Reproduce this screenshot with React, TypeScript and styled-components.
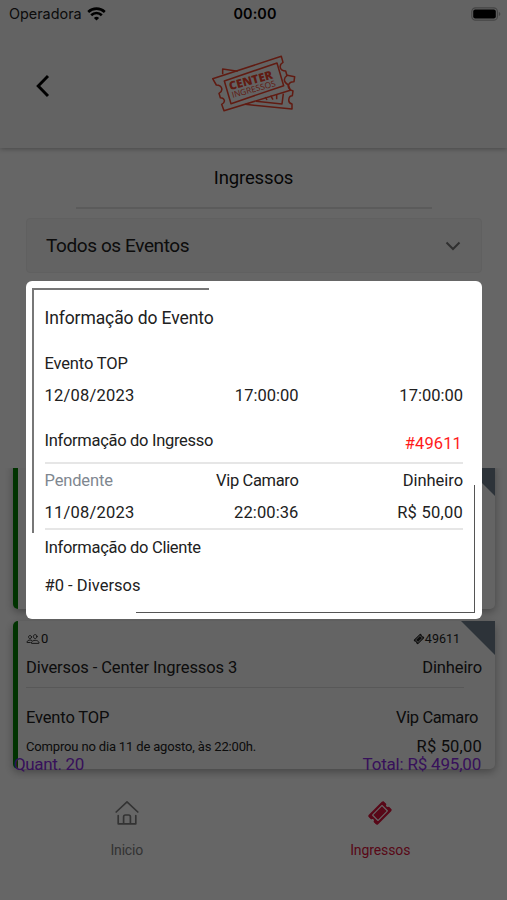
import React from "react";
import styled, { createGlobalStyle } from "styled-components";
import { FaTicketAlt } from "react-icons/fa";
import { IoPeopleOutline } from "react-icons/io5";

const GlobalStyle = createGlobalStyle`
  * { box-sizing: border-box; }
  body { margin: 0; background: #fff; font-family: Roboto, "Open Sans", sans-serif; color: #212121; }
`;

const Screen = styled.div`
  position: relative;
  display: flex;
  flex-direction: column;
  width: 507px;
  height: 900px;
  overflow: hidden;
  background: #fff;
`;

const Text = styled.span<{ $size?: number; $ls?: number; $color?: string }>`
  font-size: ${(p) => p.$size ?? 16.5}px;
  letter-spacing: ${(p) => p.$ls ?? 0}px;
  color: ${(p) => p.$color ?? "inherit"};
  line-height: 16px;
  white-space: nowrap;
`;

const Header = styled.header`
  flex: none;
  height: 148px;
  background: #f8f8f8;
  box-shadow: 0 1px 5px rgba(0, 0, 0, 0.3);
`;

const StatusBar = styled.div`
  display: grid;
  grid-template-columns: 1fr auto 1fr;
  align-items: center;
  height: 27px;
  padding: 0 6px 0 9px;
  font-family: Inter, sans-serif;
`;

const Carrier = styled.div`
  display: flex;
  align-items: center;
  gap: 5px;
  font-size: 14.4px;
`;

const Clock = styled.div`
  font-size: 14.4px;
  font-weight: 600;
  letter-spacing: 0.1px;
  color: #000;
`;

const BatteryIcon = styled.svg`
  justify-self: end;
`;

const NavBar = styled.div`
  display: grid;
  grid-template-columns: 1fr auto 1fr;
  align-items: center;
  height: 118px;
  padding: 0 34px 0 35px;
`;

const LogoArt = styled.svg`
  margin-bottom: 4px;
`;

const Title = styled.div`
  display: flex;
  justify-content: center;
  align-items: center;
  height: 59px;
  color: #111;
`;

const TitleRule = styled.hr`
  width: 356px;
  height: 2px;
  margin: 0 auto;
  border: 0;
  background: #e4e4e4;
`;

const Select = styled.div`
  display: flex;
  justify-content: space-between;
  align-items: center;
  flex: none;
  height: 55px;
  margin: 9px 25px 0 26px;
  padding: 1px 20px 0 19px;
  background: #f7f7f7;
  border: 1px solid #efefef;
  border-radius: 4px;
`;

const TicketList = styled.main`
  display: flex;
  flex-direction: column;
  gap: 12px;
  flex: none;
  height: 311px;
  margin-top: 195px;
  padding: 0 12px 0 13px;
  overflow: hidden;
`;

const TicketCard = styled.article<{ $scrolled?: boolean }>`
  flex: none;
  position: relative;
  height: ${(p) => (p.$scrolled ? 147 : 148)}px;
  margin-top: ${(p) => (p.$scrolled ? -6 : 0)}px;
  padding: 8px 13px 0 8px;
  background: #fafafa;
  border-left: 5px solid #008000;
  border-radius: 5px;
  box-shadow: 0 3px 9px rgba(0, 0, 0, 0.32);
`;

const Corner = styled.div`
  position: absolute;
  top: 0;
  right: 0;
  width: 34px;
  height: 34px;
  background: #708090;
  clip-path: polygon(0 0, 100% 0, 100% 100%);
`;

const CardRow = styled.div<{ $h: number; $right?: number }>`
  display: flex;
  justify-content: space-between;
  align-items: center;
  height: ${(p) => p.$h}px;
  padding-right: ${(p) => p.$right ?? 0}px;
`;

const Badge = styled.span`
  display: flex;
  align-items: center;
  gap: 1px;
`;

const TicketGlyph = styled(FaTicketAlt)`
  transform: rotate(-45deg) scaleY(0.9);
`;

const CardRule = styled.hr`
  height: 1px;
  margin: 1px 18px 13px 0;
  border: 0;
  background: #dcdcdc;
`;

const Totals = styled.div`
  position: relative;
  display: flex;
  flex: none;
  justify-content: space-between;
  align-items: center;
  height: 24px;
  margin-top: -27px;
  padding: 0 26px 0 14px;
  color: #8a2be2;
`;

const TabBar = styled.nav`
  display: grid;
  grid-template-columns: 1fr 1fr;
  flex: 1;
  margin-top: 3px;
  background: #fff;
`;

const Tab = styled.div<{ $active?: boolean }>`
  display: flex;
  flex-direction: column;
  align-items: center;
  gap: 16px;
  padding-top: 21px;
  color: ${(p) => (p.$active ? "#dc143c" : "#808080")};
`;

const TabIcon = styled.div`
  display: flex;
  align-items: center;
  justify-content: center;
  width: 26px;
  height: 26px;
`;

const Overlay = styled.div`
  position: absolute;
  inset: 0;
  padding: 281px 25px 0 26px;
  background: rgba(0, 0, 0, 0.6);
`;

const Modal = styled.section`
  position: relative;
  height: 338px;
  padding: 19px 19px 0 18.5px;
  background: #fff;
  border-radius: 6px;
`;

const FrameTop = styled.i`
  position: absolute;
  top: 7px;
  left: 6px;
  width: 177px;
  height: 245px;
  border-left: 2px solid #777;
  &::before { content: ""; display: block; height: 2px; background: #777; }
`;

const FrameBottom = styled.i`
  position: absolute;
  right: 7px;
  bottom: 6px;
  display: flex;
  align-items: flex-end;
  width: 339px;
  height: 128px;
  border-right: 1px solid #555;
  &::after { content: ""; flex: 1; height: 1px; background: #555; }
`;

const InfoRow = styled.div<{ $h?: number; $mt?: number }>`
  display: grid;
  grid-template-columns: 152px 102px 1fr;
  align-items: center;
  height: ${(p) => p.$h ?? 32}px;
  margin-top: ${(p) => p.$mt ?? 0}px;
  > :not(:first-child) { justify-self: end; }
`;

const HeadingRow = styled.div<{ $h: number; $mt?: number }>`
  display: flex;
  justify-content: space-between;
  align-items: center;
  height: ${(p) => p.$h}px;
  margin-top: ${(p) => p.$mt ?? 0}px;
`;

const Lowered = styled.div`
  padding: 4px 1px 0 0;
`;

const Rule = styled.hr`
  height: 2px;
  margin: 0;
  border: 0;
  background: #e6e6e6;
`;

const Wifi = () => (
  <svg width="19" height="14" viewBox="0 0 19 14" fill="none" stroke="#000" strokeWidth="2.6">
    <path d="M1.2 5a12 12 0 0 1 16.6 0" />
    <path d="M4.2 8.2a7.6 7.6 0 0 1 10.6 0" />
    <path d="M9.5 13.6 6.9 11a3.9 3.9 0 0 1 5.2 0z" fill="#000" stroke="none" />
  </svg>
);

const Battery = () => (
  <BatteryIcon width="30" height="14" viewBox="0 0 30 14">
    <rect x=".8" y=".8" width="25.6" height="12.4" rx="3.8" fill="none" stroke="#aaa" strokeWidth="1.2" />
    <rect x="2.2" y="2.4" width="22.6" height="9.2" rx="2" fill="#000" />
    <path d="M27.8 5c2 .6 2 3.4 0 4z" fill="#aaa" />
  </BatteryIcon>
);

const Back = () => (
  <svg width="16" height="24" viewBox="0 0 16 24" fill="none" stroke="#000" strokeWidth="2.9">
    <path d="M13 2 3.2 12 13 22" />
  </svg>
);

const Logo = () => (
  <LogoArt width="84" height="58" viewBox="36 44 252 174" fill="none" stroke="#f0452e" strokeWidth="4.6" strokeLinejoin="round">
    <path d="M68 102V86l45 7M258 104l26 5-2 15c-15-1-23 14-12 24l9 4-2 14c-12 0-16 22-1 25v15l-141-14" />
    <path d="M250 160l-4 31-78-8M196 170l5 9M212 166l7 12M230 164v13" />
    <path d="M38 115 244 48l5 18c-14 8-10 26 8 26l4 14c-12 8-10 20 4 28l6 16L72 211l-7-19c14-7 8-20-4-20l-4-13c14-8 10-24-8-25z" />
    <path d="M73 122 231 68l20 68L93 190z" />
    <g fill="#f0452e" stroke="none" fontFamily="Open Sans, sans-serif">
      <text transform="translate(91 150) rotate(-15.5)" fontSize="35" fontWeight="800" textLength="134" lengthAdjust="spacingAndGlyphs">CENTER</text>
      <text transform="translate(98 173) rotate(-15.5)" fontSize="25" fontWeight="400" textLength="136" lengthAdjust="spacingAndGlyphs">INGRESSOS</text>
    </g>
  </LogoArt>
);

const ChevronDown = () => (
  <svg width="16" height="10" viewBox="0 0 16 10" fill="none" stroke="#777" strokeWidth="2">
    <path d="m1.5 1.5 6.5 6.5 6.5-6.5" />
  </svg>
);

const Home = () => (
  <svg width="24" height="26" viewBox="0 0 24 26" fill="none" stroke="currentColor" strokeWidth="1.7" strokeLinecap="round" strokeLinejoin="round">
    <path d="M1.2 12 12 1.8 22.8 12" />
    <path d="M3.2 15.6v8.2h17.6v-8.2M8.6 23.8v-7a1.8 1.8 0 0 1 1.8-1.8h3.2a1.8 1.8 0 0 1 1.8 1.8v7" />
  </svg>
);

export default function App() {
  return (
    <Screen>
      <GlobalStyle />
      <Header>
        <StatusBar>
          <Carrier>Operadora <Wifi /></Carrier>
          <Clock>00:00</Clock>
          <Battery />
        </StatusBar>
        <NavBar>
          <Back />
          <Logo />
        </NavBar>
      </Header>
      <Title><Text $size={18.5} $ls={-0.15}>Ingressos</Text></Title>
      <TitleRule />
      <Select>
        <Text $size={19} $ls={-0.4}>Todos os Eventos</Text>
        <ChevronDown />
      </Select>
      <TicketList>
        <TicketCard $scrolled><Corner /></TicketCard>
        <TicketCard>
          <Corner />
          <CardRow $h={20} $right={22}>
            <Badge><IoPeopleOutline size={14} /><Text $size={13}>0</Text></Badge>
            <Badge><TicketGlyph size={10} /><Text $size={12.5}>49611</Text></Badge>
          </CardRow>
          <CardRow $h={37}>
            <Text $ls={-0.1}>Diversos - Center Ingressos 3</Text>
            <Text $ls={-0.1}>Dinheiro</Text>
          </CardRow>
          <CardRule />
          <CardRow $h={33} $right={4}>
            <Text $ls={-0.15}>Evento TOP</Text>
            <Text $ls={-0.4}>Vip Camaro</Text>
          </CardRow>
          <CardRow $h={25}>
            <Text $size={13} $ls={-0.16}>Comprou no dia 11 de agosto, às 22:00h.</Text>
            <Text $ls={0.2}>R$ 50,00</Text>
          </CardRow>
        </TicketCard>
      </TicketList>
      <Totals>
        <Text $size={17} $ls={-0.35}>Quant. 20</Text>
        <Text $size={17} $ls={-0.2}>Total: R$ 495,00</Text>
      </Totals>
      <TabBar>
        <Tab>
          <TabIcon><Home /></TabIcon>
          <Text $size={14} $ls={-0.2}>Inicio</Text>
        </Tab>
        <Tab $active>
          <TabIcon><TicketGlyph size={22} /></TabIcon>
          <Text $size={14} $ls={-0.1}>Ingressos</Text>
        </Tab>
      </TabBar>
      <Overlay>
        <Modal>
          <FrameTop />
          <FrameBottom />
          <HeadingRow $h={36}><Text $size={17.5} $ls={-0.1}>Informação do Evento</Text></HeadingRow>
          <InfoRow $mt={12}><Text $ls={-0.15}>Evento TOP</Text></InfoRow>
          <InfoRow>
            <Text $ls={0.22}>12/08/2023</Text>
            <Text>17:00:00</Text>
            <Text>17:00:00</Text>
          </InfoRow>
          <HeadingRow $h={32} $mt={13}>
            <Text $ls={-0.3}>Informação do Ingresso</Text>
            <Lowered><Text $ls={0.1} $color="#ff1a1a">#49611</Text></Lowered>
          </HeadingRow>
          <HeadingRow $h={5} />
          <Rule />
          <InfoRow $h={34}>
            <Text $ls={-0.15} $color="#808790">Pendente</Text>
            <Text $ls={-0.35}>Vip Camaro</Text>
            <Text $ls={-0.05}>Dinheiro</Text>
          </InfoRow>
          <InfoRow $h={30}>
            <Text $ls={0.22}>11/08/2023</Text>
            <Text $ls={0.1}>22:00:36</Text>
            <Text $ls={0.25}>R$ 50,00</Text>
          </InfoRow>
          <Rule />
          <HeadingRow $h={35}><Text $ls={-0.3}>Informação do Cliente</Text></HeadingRow>
          <InfoRow $mt={5}><Text $ls={0.03}>#0 - Diversos</Text></InfoRow>
        </Modal>
      </Overlay>
    </Screen>
  );
}
